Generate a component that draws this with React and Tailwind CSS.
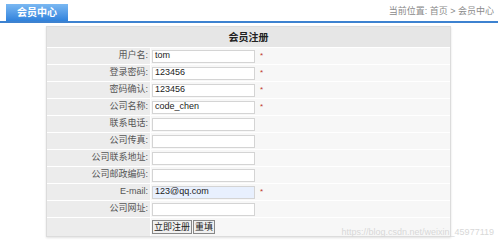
const rows = [
  { label: "用户名:", value: "tom", star: true },
  { label: "登录密码:", value: "123456", star: true },
  { label: "密码确认:", value: "123456", star: true },
  { label: "公司名称:", value: "code_chen", star: true },
  { label: "联系电话:", value: "" },
  { label: "公司传真:", value: "" },
  { label: "公司联系地址:", value: "" },
  { label: "公司邮政编码:", value: "" },
  { label: "E-mail:", value: "123@qq.com", star: true, filled: true },
  { label: "公司网址:", value: "" },
];

const font = { fontFamily: '"Liberation Sans", "Noto Sans CJK SC", sans-serif' };

export default function App() {
  return (
    <div className="relative w-[498px] h-[243px] bg-white overflow-hidden" style={font}>
      {/* Top bar */}
      <div className="flex items-end justify-between h-[23px] border-b-2 border-[#3d82d0]">
        <div className="ml-[6px] w-[62px] h-[17px] flex items-center justify-center bg-gradient-to-b from-[#7ab8f2] to-[#2f82dc] text-white text-[10px] font-bold">
          会员中心
        </div>
        <div className="mr-[4px] mb-[3px] text-[9px] text-[#8a8a8a]">当前位置: 首页 &gt; 会员中心</div>
      </div>

      {/* Form table */}
      <div className="ml-[46px] mt-[3px] w-[405px] border border-[#dcdcdc] shadow-[0_1px_2px_rgba(0,0,0,0.12)] bg-white flex flex-col gap-[1px]">
        <div className="h-[20px] bg-[#e6e6e6] flex items-center justify-center text-[10px] font-bold text-[#222]">
          会员注册
        </div>
        {rows.map((r) => (
          <div key={r.label} className="flex h-[16px]">
            <div className="w-[103px] bg-[#ececec] flex items-center justify-end pr-[2px] text-[9px] text-[#555]">
              {r.label}
            </div>
            <div className="flex-1 ml-[1px] bg-[#f7f7f7] flex items-center pl-[1px]">
              <div
                className={`w-[103px] h-[13px] border border-[#d4d4d4] flex items-center px-[2px] text-[9px] text-[#222] ${
                  r.filled ? "bg-[#e8f0fe]" : "bg-white"
                }`}
              >
                {r.value}
              </div>
              {r.star && <span className="ml-[5px] text-[8px] text-[#c0392b] leading-none">*</span>}
            </div>
          </div>
        ))}
        <div className="flex h-[18px]">
          <div className="w-[103px] bg-[#ececec]" />
          <div className="flex-1 ml-[1px] bg-[#f7f7f7] flex items-center pl-[1px] gap-[1px]">
            <button className="h-[14px] px-[1px] border border-[#888] bg-[#f0f0f0] text-[9px] text-[#222] leading-none">
              立即注册
            </button>
            <button className="h-[14px] px-[1px] border border-[#888] bg-[#f0f0f0] text-[9px] text-[#222] leading-none">
              重填
            </button>
          </div>
        </div>
      </div>

      {/* Watermark */}
      <div className="absolute right-[4px] bottom-[4px] text-[9px] text-[#d8d8d8]">
        https://blog.csdn.net/weixin_45977119
      </div>
    </div>
  );
}
